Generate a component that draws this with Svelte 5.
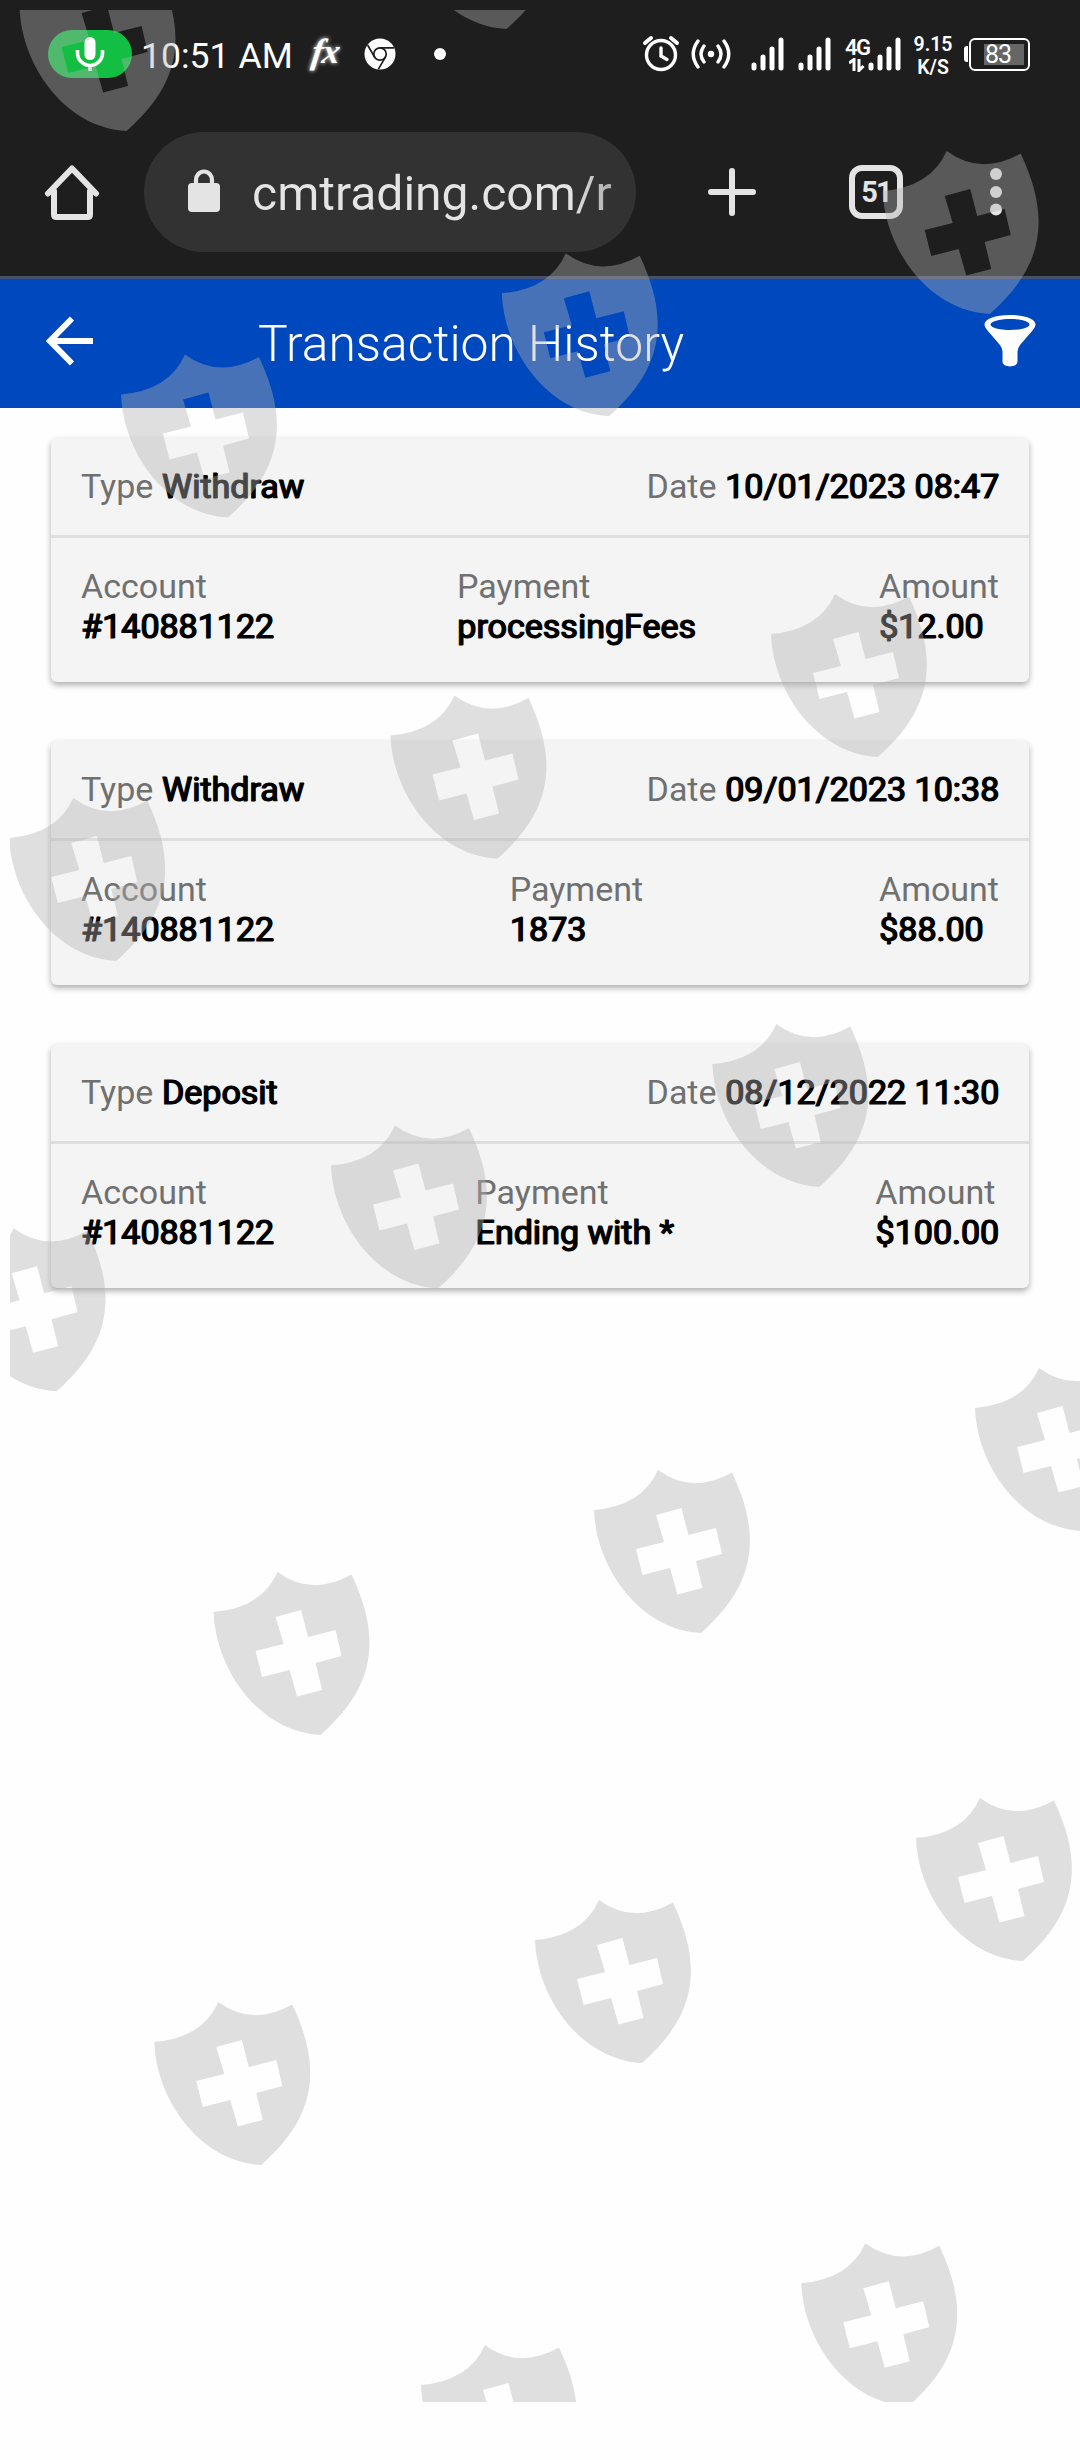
<script lang="ts">
	interface Transaction {
		type: string;
		date: string;
		account: string;
		payment: string;
		amount: string;
	}

	const transactions: Transaction[] = [
		{ type: 'Withdraw', date: '10/01/2023 08:47', account: '#140881122', payment: 'processingFees', amount: '$12.00' },
		{ type: 'Withdraw', date: '09/01/2023 10:38', account: '#140881122', payment: '1873', amount: '$88.00' },
		{ type: 'Deposit', date: '08/12/2022 11:30', account: '#140881122', payment: 'Ending with *', amount: '$100.00' }
	];

	// Top peak of every shield in the watermark
	const shields = [
		[83.6, -32], [463.5, -134],
		[946.7, 151], [565.8, 253.3], [185, 354.4],
		[835, 594], [454.5, 695.6], [73.3, 798],
		[776.4, 1024], [395, 1125.5], [13.6, 1228.3],
		[1039, 1368], [658, 1470], [277.6, 1572],
		[980, 1798], [599, 1900], [218.3, 2002],
		[865.3, 2243.3], [485, 2345]
	];
</script>

{#snippet signal()}
	<svg class="signal" width="33" height="34" viewBox="0 0 33 34" stroke="#fff" stroke-width="5" stroke-linecap="round">
		<path d="M3 28v3M12 20v11M21 12v19M30 3v28" />
	</svg>
{/snippet}

<div class="screen">
	<div class="status-bar">
		<div class="mic">
			<svg width="30" height="36" viewBox="0 0 30 36">
				<rect x="9.500" y="1" width="11" height="23" rx="5.500" fill="#fff" />
				<path d="M2.500 14v3a12.500 12.500 0 0 0 25 0v-3M15 29v6" fill="none" stroke="#fff" stroke-width="3.600" />
			</svg>
		</div>
		<span class="time">10:51 AM</span>
		<span class="fx">fx</span>
		<svg class="chrome" width="32" height="32" viewBox="0 0 32 32">
			<circle cx="16" cy="16" r="15.500" fill="#fff" />
			<g fill="none" stroke="#1e1e1e" stroke-width="1.700">
				<circle cx="16" cy="16" r="6.200" />
				<path d="M16 9.800h14M10.600 19.100 3.600 7M21.400 19.100l-7 12" />
			</g>
		</svg>
		<span class="dot"></span>

		<div class="indicators">
			<svg width="38" height="38" viewBox="0 0 38 38" fill="none" stroke="#fff" stroke-linecap="round">
				<circle cx="19" cy="20" r="14.500" stroke-width="3.400" />
				<path d="M19 13v8l6 3.500" stroke-width="3.400" />
				<path d="m3 8 6-5M35 8l-6-5" stroke-width="4" />
			</svg>
			<svg class="hotspot" width="40" height="34" viewBox="0 0 40 34" fill="none" stroke="#fff" stroke-width="3.400" stroke-linecap="round">
				<circle cx="20" cy="17" r="3.200" fill="#fff" stroke="none" />
				<path d="M13 9q-6 8 0 16M27 9q6 8 0 16M7 4q-9.500 13 0 26M33 4q9.500 13 0 26" />
			</svg>
			{@render signal()}
			{@render signal()}
			<div class="network">
				<div class="lte">
					<span>4G</span>
					<svg width="16" height="14" viewBox="0 0 16 14" fill="none" stroke="#fff" stroke-width="3">
						<path d="M0 5 5 1.500V13M10 1v11.500l4.500-4.500" />
					</svg>
				</div>
				{@render signal()}
			</div>
			<div class="speed"><span>9.15</span><span>K/S</span></div>
			<div class="battery">
				<span class="battery-tip"></span>
				<span class="battery-body"><span class="battery-level">83</span></span>
			</div>
		</div>
	</div>

	<div class="toolbar">
		<svg width="56" height="56" viewBox="0 0 56 56" fill="none" stroke="#e4e4e4" stroke-width="6" stroke-linecap="round" stroke-linejoin="round">
			<path d="M4 29.500 28 4.500l24 25M10 27v23.500q0 2.500 2.500 2.500h31q2.500 0 2.500-2.500V27" />
		</svg>
		<div class="omnibox">
			<svg width="32" height="43" viewBox="0 0 32 43">
				<rect y="14" width="32" height="29" rx="4" fill="#e4e4e4" />
				<path d="M8 16v-5a8 8.500 0 0 1 16 0v5" fill="none" stroke="#e4e4e4" stroke-width="4.200" />
			</svg>
			<span class="url">cmtrading.com/r</span>
		</div>
		<svg class="plus" width="50" height="50" viewBox="0 0 50 50" stroke="#e4e4e4" stroke-width="6" stroke-linecap="round">
			<path d="M25 4v42M4 25h42" />
		</svg>
		<div class="tabs">51</div>
		<svg class="menu" width="14" height="50" viewBox="0 0 14 50" fill="#e4e4e4">
			<circle cx="7" cy="7" r="6" />
			<circle cx="7" cy="25" r="6" />
			<circle cx="7" cy="42.500" r="6" />
		</svg>
	</div>

	<header>
		<svg width="48" height="50" viewBox="0 0 48 50" fill="none" stroke="#fff" stroke-width="6">
			<path d="M26 2.500 4 25 26 47.500M3 25h44" />
		</svg>
		<h1>Transaction History</h1>
		<svg class="filter" width="52" height="52" viewBox="0 0 52 52">
			<path
				fill="#fff"
				fill-rule="evenodd"
				d="M26 0C11 0 .500 4 .500 9.500c0 2 1.500 4 3 6L16 30q2.500 3.500 2.500 6.500v10c0 6.500 15 6.500 15 0v-10q0-3 2.500-6.500l12.500-14.500c1.500-2 3-4 3-6C51.500 4 41 0 26 0Zm0 4c11 0 19.500 2.500 19.500 5.500S37 15 26 15 6.500 12.500 6.500 9.500 15 4 26 4Z"
			/>
		</svg>
	</header>

	<main>
		{#each transactions as item}
			<section class="card">
				<div class="card-head">
					<div>Type <b>{item.type}</b></div>
					<div>Date <b>{item.date}</b></div>
				</div>
				<div class="card-body">
					<div>Account<br /><b>{item.account}</b></div>
					<div>Payment<br /><b>{item.payment}</b></div>
					<div>Amount<br /><b>{item.amount}</b></div>
				</div>
			</section>
		{/each}
	</main>

	<svg class="watermark" width="1080" height="2460" viewBox="0 0 1080 2460">
		<defs>
			<clipPath id="frame"><rect x="10" y="10" width="1070" height="2392" /></clipPath>
			<path
				id="shield"
				fill-rule="evenodd"
				d="M-64 40Q-16 36 0 0Q34 25 74 2.500C104 66 98 115 43 163C-18 160-62 98-64 40ZM-2 45 6 72-22 79-15.500 105 12 98 19.500 124.500 44.500 118 38 91 64 84 58 58 30.500 65 23.500 38Z"
			/>
		</defs>
		<g clip-path="url(#frame)">
			{#each shields as [x, y]}
				<use href="#shield" {x} {y} />
			{/each}
		</g>
	</svg>
</div>

<style>
	:global(body) {
		margin: 0;
		background: #fefefe;
	}

	.screen {
		position: relative;
		width: 1080px;
		height: 2460px;
		overflow: hidden;
		background: #fefefe;
		font-family: Roboto, 'Liberation Sans', sans-serif;
	}

	svg {
		display: block;
		flex: none;
	}

	.status-bar {
		display: flex;
		align-items: center;
		box-sizing: border-box;
		height: 108px;
		padding: 0 50px 0 48px;
		background: #1e1e1e;
		color: #fff;
	}

	.mic {
		display: flex;
		align-items: center;
		justify-content: center;
		width: 84px;
		height: 48px;
		border-radius: 24px;
		background: #12bf42;
	}

	.time {
		width: 154px;
		margin: 3px 0 0 9px;
		font-size: 35.6px;
		line-height: 48px;
		white-space: nowrap;
	}

	.fx {
		width: 35px;
		margin: -4px 0 0 17px;
		font: italic bold 35px/40px 'Liberation Serif', serif;
		letter-spacing: -1px;
		text-shadow: 0 0 4px #fff;
		transform: skewX(-8deg);
	}

	.chrome {
		margin-left: 17px;
	}

	.dot {
		width: 12px;
		height: 12px;
		margin-left: 38px;
		border-radius: 50%;
		background: #fff;
	}

	.indicators {
		display: flex;
		align-items: center;
		margin-left: auto;
	}

	.hotspot {
		margin: 0 20px 0 11px;
	}

	.signal + .signal {
		margin-left: 14px;
	}

	.network {
		display: flex;
		align-items: center;
		margin-left: 14px;
	}

	.lte {
		display: flex;
		flex-direction: column;
		width: 23px;
		height: 34px;
		font-size: 22px;
		font-weight: 600;
		line-height: 21px;
		letter-spacing: -1.500px;
	}

	.lte svg {
		margin-left: 4px;
	}

	.speed {
		display: flex;
		flex-direction: column;
		align-items: center;
		width: 40px;
		margin: 3px 0 0 12px;
		font-size: 19.5px;
		font-weight: 600;
		line-height: 23px;
	}

	.battery {
		display: flex;
		align-items: center;
		margin-left: 11px;
	}

	.battery-tip {
		width: 4px;
		height: 16px;
		margin-right: 1px;
		border-radius: 3px 0 0 3px;
		background: #fff;
	}

	.battery-body {
		display: flex;
		justify-content: flex-end;
		box-sizing: border-box;
		width: 61px;
		height: 33px;
		padding: 4px;
		border: 2px solid #fff;
		border-radius: 6px;
	}

	.battery-level {
		width: 39px;
		padding-left: 1px;
		background: #666;
		font-size: 25px;
		line-height: 22px;
		letter-spacing: -1px;
	}

	.toolbar {
		display: flex;
		align-items: center;
		box-sizing: border-box;
		height: 171px;
		padding: 0 77px 0 44px;
		border-bottom: 3px solid #45506c;
		background: #1e1e1e;
	}

	.omnibox {
		display: flex;
		align-items: center;
		box-sizing: border-box;
		width: 492px;
		height: 120px;
		margin-left: 44px;
		padding-left: 44px;
		border-radius: 60px;
		background: #323232;
	}

	.omnibox svg {
		margin-top: -3px;
	}

	.url {
		width: 362px;
		margin: 4px 0 0 32px;
		overflow: hidden;
		background: linear-gradient(90deg, #e4e4e4 88%, #aaa);
		background-clip: text;
		color: transparent;
		font-size: 48px;
		line-height: 60px;
		white-space: nowrap;
	}

	.plus {
		margin-left: 71px;
	}

	.tabs {
		box-sizing: border-box;
		width: 54px;
		height: 54px;
		margin-left: 92px;
		border: 6px solid #e4e4e4;
		border-radius: 13px;
		color: #e4e4e4;
		font-size: 29px;
		font-weight: 700;
		line-height: 43px;
		text-align: center;
		letter-spacing: -2px;
	}

	.menu {
		margin-left: auto;
	}

	header {
		display: flex;
		align-items: center;
		box-sizing: border-box;
		height: 129px;
		padding: 0 44px 5px 46px;
		background: #0048bd;
	}

	h1 {
		margin: 6px 0 0 164px;
		color: #fff;
		font-size: 49.8px;
		font-weight: 300;
		line-height: 60px;
		white-space: nowrap;
	}

	.filter {
		margin-left: auto;
	}

	main {
		display: flex;
		flex-direction: column;
		gap: 59px;
		padding: 30px 51px;
	}

	.card {
		height: 244px;
		border-radius: 6px;
		background: #f4f4f4;
		box-shadow: 0 3px 6px rgba(0, 0, 0, 0.32);
		color: #707070;
		font-size: 34px;
		line-height: 40px;
	}

	.card-head,
	.card-body {
		display: flex;
		justify-content: space-between;
		padding: 28px 30px 29px;
	}

	.card-head {
		border-bottom: 3px solid #dedede;
	}

	.card b {
		color: #000;
		font-weight: 400;
		text-shadow: 1px 0 0 #000;
		-webkit-text-stroke: 1px #000;
	}

	.watermark {
		position: absolute;
		inset: 0;
		fill: rgba(177, 177, 177, 0.4);
		pointer-events: none;
	}
</style>
